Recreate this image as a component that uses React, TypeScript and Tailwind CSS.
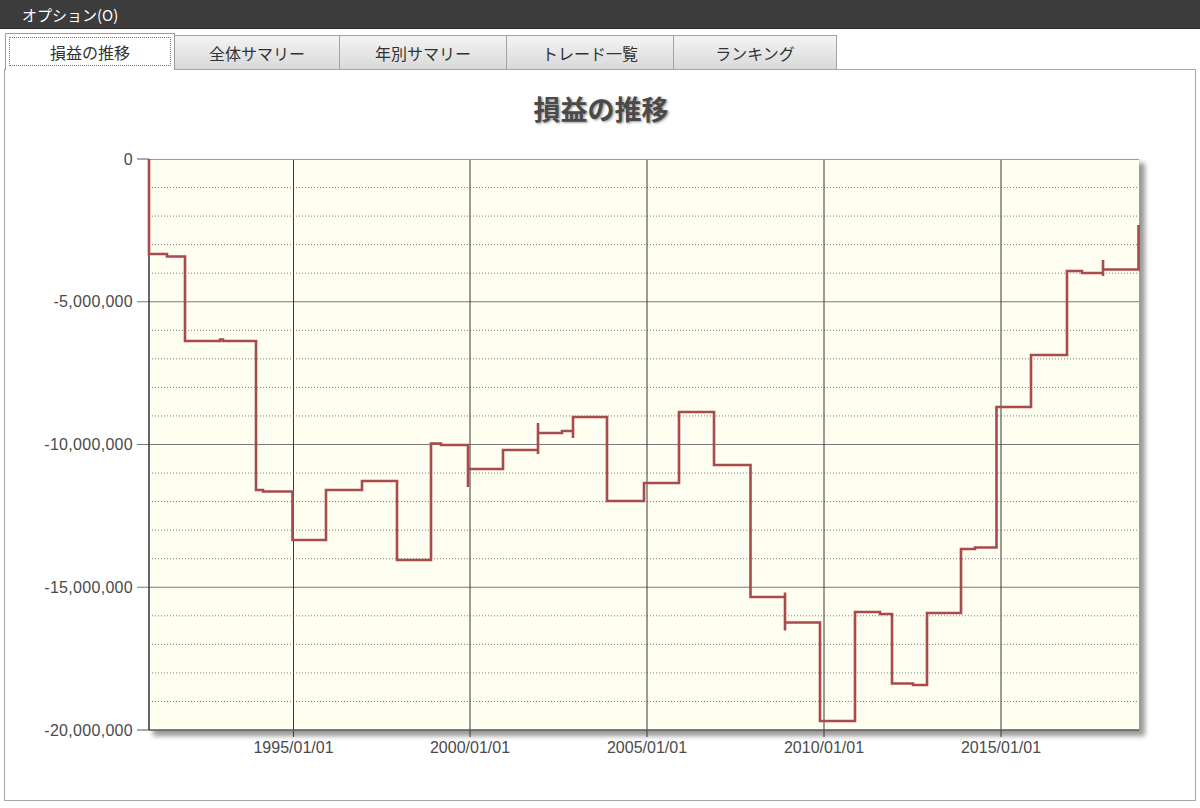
import React from "react";

const JP = '"Noto Sans CJK JP", "Liberation Sans", sans-serif';
const NUM = '"Liberation Sans", Arial, sans-serif';

// plot area in page coordinates
const L = 149;
const R = 1139;
const T = 159;
const B = 730;
const STEP = (B - T) / 20; // 1,000,000

const yLabels = ["0", "-5,000,000", "-10,000,000", "-15,000,000", "-20,000,000"];
const xTicks = [
  { x: 293.5, label: "1995/01/01" },
  { x: 470, label: "2000/01/01" },
  { x: 647, label: "2005/01/01" },
  { x: 824, label: "2010/01/01" },
  { x: 1001, label: "2015/01/01" },
];

// traced step line (page px)
const pts: [number, number][] = [
  [149, 159], [149, 254], [167, 254], [167, 256.5], [185, 256.5], [185, 341],
  [220, 341], [220, 339.5], [223, 339.5], [223, 341], [256, 341], [256, 490],
  [263, 490], [263, 491.5], [292.5, 491.5], [292.5, 540], [326, 540], [326, 490],
  [362, 490], [362, 481], [397, 481], [397, 560], [431, 560], [431, 443.5],
  [441, 443.5], [441, 445], [468, 445], [468, 487], [468, 469], [503, 469],
  [503, 450], [538, 450], [538, 454], [538, 423], [538, 433], [562, 433],
  [562, 431], [573, 431], [573, 438], [573, 417], [607, 417], [607, 501],
  [644, 501], [644, 483], [679, 483], [679, 412], [714, 412], [714, 465],
  [750.5, 465], [750.5, 597], [785, 597], [785, 592.5], [785, 630.5], [785, 622.5],
  [820, 622.5], [820, 721], [855, 721], [855, 612], [880, 612], [880, 614],
  [892, 614], [892, 683.5], [913, 683.5], [913, 685], [927, 685], [927, 613],
  [961, 613], [961, 549], [975, 549], [975, 547.5], [996.5, 547.5], [996.5, 407],
  [1031, 407], [1031, 355], [1067, 355], [1067, 271], [1082, 271], [1082, 273],
  [1103, 273], [1103, 260], [1103, 276], [1103, 269.5], [1138.5, 269.5], [1138.5, 225],
];

const linePath = pts.map(([x, y], i) => `${i === 0 ? "M" : "L"}${x},${y}`).join(" ");

const tabs = [
  { label: "損益の推移", w: 170 },
  { label: "全体サマリー", w: 165 },
  { label: "年別サマリー", w: 167 },
  { label: "トレード一覧", w: 167 },
  { label: "ランキング", w: 163 },
];

function Chart() {
  const minor: number[] = [];
  const major: number[] = [];
  for (let k = 1; k < 20; k++) {
    if (k % 5 === 0) major.push(T + k * STEP);
    else minor.push(T + k * STEP);
  }

  return (
    <svg width={1190} height={730} viewBox="5 70 1190 730" className="block">
      <defs>
        <filter id="plotShadow" x="-5%" y="-5%" width="110%" height="110%">
          <feGaussianBlur stdDeviation="2.5" />
        </filter>
        <filter id="titleShadow" x="-10%" y="-30%" width="120%" height="160%">
          <feGaussianBlur stdDeviation="1.2" />
        </filter>
      </defs>

      <text
        x={602.5}
        y={121}
        textAnchor="middle"
        fontFamily={JP}
        fontSize={27}
        fontWeight={700}
        fill="#9a9a9a"
        filter="url(#titleShadow)"
      >
        損益の推移
      </text>
      <text x={601} y={119.5} textAnchor="middle" fontFamily={JP} fontSize={27} fontWeight={700} fill="#4a4a4a">
        損益の推移
      </text>

      {/* plot */}
      <rect x={L + 4} y={T + 4} width={R - L + 2} height={B - T + 2} fill="#9a9a9a" filter="url(#plotShadow)" />
      <rect x={L} y={T} width={R - L} height={B - T} fill="#fefef1" />

      {minor.map((y) => (
        <line key={y} x1={L + 3} x2={R} y1={y} y2={y} stroke="#7e7e7e" strokeWidth={1} strokeDasharray="1 2" />
      ))}
      {major.map((y) => (
        <line key={y} x1={L - 12} x2={R} y1={y} y2={y} stroke="#7a7a7a" strokeWidth={1} />
      ))}
      {xTicks.map((t) => (
        <line key={t.x} x1={t.x} x2={t.x} y1={T} y2={B + 7} stroke="#3a3a3a" strokeWidth={1} />
      ))}

      <line x1={L} x2={R} y1={T + 0.5} y2={T + 0.5} stroke="#9a9a9a" strokeWidth={1} />
      <line x1={L - 12} x2={L} y1={T} y2={T} stroke="#555" strokeWidth={1} />
      <line x1={L - 12} x2={L} y1={B} y2={B} stroke="#555" strokeWidth={1} />
      <line x1={L} x2={R} y1={B} y2={B} stroke="#5a5a5a" strokeWidth={1.5} />
      <line x1={L} x2={L} y1={T} y2={B} stroke="#333" strokeWidth={1.5} />

      <path d={linePath} fill="none" stroke="#a94a4c" strokeWidth={2.6} strokeLinejoin="miter" />

      {yLabels.map((label, i) => (
        <text
          key={label}
          x={133}
          y={T + i * STEP * 5 + 5.5}
          textAnchor="end"
          fontFamily={NUM}
          fontSize={16}
          fill="#4a4a4a"
          letterSpacing={0.3}
        >
          {label}
        </text>
      ))}
      {xTicks.map((t) => (
        <text key={t.label} x={t.x} y={753} textAnchor="middle" fontFamily={NUM} fontSize={16} fill="#4a4a4a">
          {t.label}
        </text>
      ))}
    </svg>
  );
}

export default function App() {
  return (
    <div className="relative h-[808px] w-[1200px] overflow-hidden bg-white" style={{ fontFamily: JP }}>
      <div className="flex h-[29px] items-center border-b border-[#2a2a2a] bg-[#3c3c3c] pl-[22px] text-[15px] leading-none text-white">
        オプション(O)
      </div>

      <div className="flex h-[40px] items-end pl-[5px]">
        {tabs.map((tab, i) =>
          i === 0 ? (
            <div
              key={tab.label}
              className="relative z-10 -mb-px flex h-[37px] w-[170px] shrink-0 items-stretch border border-b-0 border-[#9c9c9c] bg-white p-[3px] pb-[4px]"
            >
              <div className="flex flex-1 items-center justify-center border border-dotted border-[#777] text-[16px] text-[#333]">
                {tab.label}
              </div>
            </div>
          ) : (
            <div
              key={tab.label}
              style={{ width: tab.w }}
              className="flex h-[34px] shrink-0 items-center justify-center border border-b-0 border-l-0 border-[#a3a3a3] bg-gradient-to-b from-[#f4f4f4] to-[#d9d9d9] pt-[1px] text-[16px] text-[#333]"
            >
              {tab.label}
            </div>
          ),
        )}
      </div>

      <div className="ml-[4px] h-[732px] w-[1192px] border border-[#a6a6a6]">
        <Chart />
      </div>
    </div>
  );
}
